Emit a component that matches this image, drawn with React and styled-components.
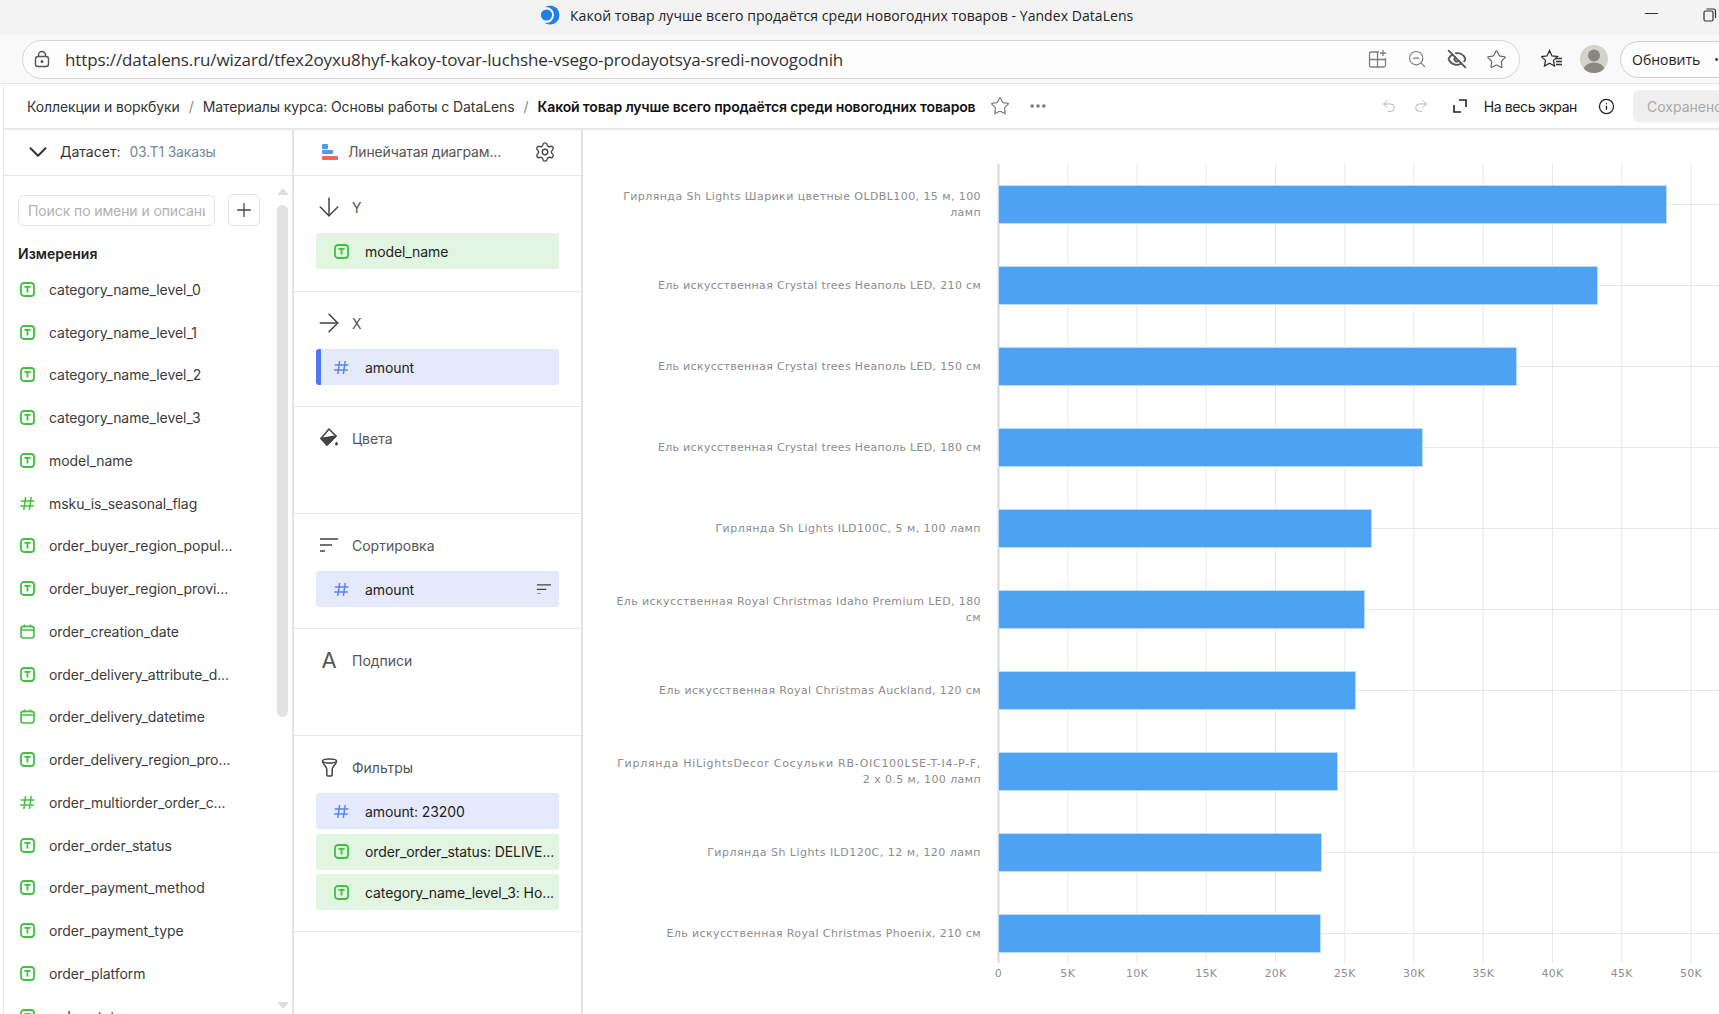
import React from "react"
import styled, { createGlobalStyle } from "styled-components"
import { ChevronDown, Plus, Settings, ArrowDown, ArrowRight, Star, Ellipsis, Undo2, Redo2, Info, ZoomOut, EyeOff } from "lucide-react"

const GlobalStyle = createGlobalStyle`
  html, body { margin: 0; padding: 0; background: #fff; }
  body { font-family: Inter, "Noto Sans", sans-serif; overflow: hidden; }
  * { box-sizing: border-box; }
`

const dimensions = [
  ["T", "category_name_level_0"],
  ["T", "category_name_level_1"],
  ["T", "category_name_level_2"],
  ["T", "category_name_level_3"],
  ["T", "model_name"],
  ["#", "msku_is_seasonal_flag"],
  ["T", "order_buyer_region_popul..."],
  ["T", "order_buyer_region_provi..."],
  ["D", "order_creation_date"],
  ["T", "order_delivery_attribute_d..."],
  ["D", "order_delivery_datetime"],
  ["T", "order_delivery_region_pro..."],
  ["#", "order_multiorder_order_c..."],
  ["T", "order_order_status"],
  ["T", "order_payment_method"],
  ["T", "order_payment_type"],
  ["T", "order_platform"],
  ["T", "order_status_ru_name"],
]

// tracking: letter spacing of the row's labels, the source font runs a bit wider
const bars = [
  { value: 48230, tracking: 0.42, lines: ["Гирлянда Sh Lights Шарики цветные OLDBL100, 15 м, 100", "ламп"] },
  { value: 43250, tracking: 0.32, lines: ["Ель искусственная Crystal trees Неаполь LED, 210 см"] },
  { value: 37400, tracking: 0.32, lines: ["Ель искусственная Crystal trees Неаполь LED, 150 см"] },
  { value: 30610, tracking: 0.32, lines: ["Ель искусственная Crystal trees Неаполь LED, 180 см"] },
  { value: 26930, tracking: 0.46, lines: ["Гирлянда Sh Lights ILD100C, 5 м, 100 ламп"] },
  { value: 26430, tracking: 0.4, lines: ["Ель искусственная Royal Christmas Idaho Premium LED, 180", "см"] },
  { value: 25780, tracking: 0.39, lines: ["Ель искусственная Royal Christmas Auckland, 120 см"] },
  { value: 24480, tracking: 0.72, lines: ["Гирлянда HiLightsDecor Сосульки RB-OIC100LSE-T-I4-P-F,", "2 x 0.5 м, 100 ламп"] },
  { value: 23320, tracking: 0.48, lines: ["Гирлянда Sh Lights ILD120C, 12 м, 120 ламп"] },
  { value: 23250, tracking: 0.39, lines: ["Ель искусственная Royal Christmas Phoenix, 210 см"] },
]

const ticks = [0, 5, 10, 15, 20, 25, 30, 35, 40, 45, 50]
const X0 = 998.5
const PER_K = 13.85

const TextIcon = ({ size = 15 }) => (
  <svg width={size} height={size} viewBox="0 0 15 15" fill="none" stroke="#3fc23f">
    <rect x="1" y="1" width="13" height="13" rx="3" strokeWidth="1.8" />
    <path d="M4.4 4.8h6.2M7.5 4.8v5.8" strokeWidth="1.8" />
  </svg>
)

const NumberIcon = ({ color = "#3fc23f", size = 15 }) => (
  <svg width={size} height={size} viewBox="0 0 15 15" fill="none" stroke={color} strokeWidth="1.5">
    <path d="M5.6 1 3.8 14M11.2 1 9.4 14M.8 5h13.6M.2 10h13.6" />
  </svg>
)

const DateIcon = () => (
  <svg width="15" height="15" viewBox="0 0 15 15" fill="none" stroke="#3fc23f" strokeWidth="1.6">
    <rect x="1" y="2.4" width="13" height="11.6" rx="2.5" />
    <path d="M1 6h13M4.5.5v3M10.5.5v3" />
  </svg>
)

const FieldIcon = ({ type }) => {
  if (type === "#") return <NumberIcon />
  if (type === "D") return <DateIcon />
  return <TextIcon />
}

const SortIcon = ({ width = 18 }) => (
  <svg width={width} height={width * 0.78} viewBox="0 0 18 14" fill="none" stroke="#444" strokeWidth="1.6">
    <path d="M0 1h18M0 7h12M0 13h5" />
  </svg>
)

const Page = () => (
  <Root>
    <GlobalStyle />
    <TitleBar>
      <svg width="20" height="20" viewBox="0 0 20 20">
        <circle cx="10" cy="10" r="9.5" fill="#1d7fe8" />
        <circle cx="6" cy="10" r="8" fill="#f3f3f3" />
        <circle cx="6.5" cy="10" r="5.6" fill="#1d7fe8" />
      </svg>
      <TitleText>Какой товар лучше всего продаётся среди новогодних товаров - Yandex DataLens</TitleText>
      <WindowButtons>
        <Minimize />
        <svg width="14" height="14" viewBox="0 0 14 14" fill="none" stroke="#333" strokeWidth="1.2">
          <rect x="1" y="3" width="9" height="10" rx="1.5" />
          <path d="M3.5 1h7a2 2 0 0 1 2 2v7" />
        </svg>
      </WindowButtons>
    </TitleBar>

    <AddressRow>
      <ClippedReload />
      <UrlPill>
        <svg width="18" height="18" viewBox="0 0 18 18" fill="none" stroke="#555" strokeWidth="1.4">
          <rect x="2.5" y="6.5" width="13" height="10" rx="2.5" />
          <path d="M5.5 6.5V5a3.5 3.5 0 0 1 7 0v1.5" />
          <circle cx="9" cy="11.5" r=".8" fill="#555" />
        </svg>
        <UrlText>https://datalens.ru/wizard/tfex2oyxu8hyf-kakoy-tovar-luchshe-vsego-prodayotsya-sredi-novogodnih</UrlText>
        <PillIcons>
          <svg width="20" height="20" viewBox="0 0 20 20" fill="none" stroke="#7d7d7d" strokeWidth="1.3">
            <path d="M11 3H3a1.5 1.5 0 0 0-1.5 1.5v12A1.5 1.5 0 0 0 3 18h13a1.5 1.5 0 0 0 1.5-1.5V9M9.5 3v15M1.5 10.5h16M15 1v6M12 4h6" />
          </svg>
          <ZoomOut size={20} color="#7d7d7d" strokeWidth={1.4} />
          <EyeOff size={20} color="#555" strokeWidth={2.2} />
          <Star size={21} color="#666" strokeWidth={1.3} />
        </PillIcons>
      </UrlPill>
      <FavList>
        <svg width="22" height="20" viewBox="0 0 22 20" fill="none" stroke="#333" strokeWidth="1.3">
          <path d="M8.5 1.5 11 7l5.5.6-4 3.8 1 5.6-5-2.8-5 2.8 1-5.6-4-3.8L6 7Z" />
          <path d="M14 9.5h7M15 12.5h6M15 15.5h6" />
        </svg>
      </FavList>
      <Avatar>
        <svg width="28" height="28" viewBox="0 0 28 28">
          <circle cx="14" cy="10.5" r="6" fill="#8a8783" />
          <ellipse cx="14" cy="24" rx="10" ry="6.5" fill="#8a8783" />
        </svg>
      </Avatar>
      <UpdateButton>Обновить<UpdateDots>•</UpdateDots></UpdateButton>
    </AddressRow>

    <Workspace>
      <Header>
        <Crumb>Коллекции и воркбуки</Crumb>
        <CrumbSlash>/</CrumbSlash>
        <Crumb>Материалы курса: Основы работы с DataLens</Crumb>
        <CrumbSlash>/</CrumbSlash>
        <CrumbCurrent>Какой товар лучше всего продаётся среди новогодних товаров</CrumbCurrent>
        <HeaderStar><Star size={20} color="#777" strokeWidth={1.4} /></HeaderStar>
        <HeaderDots><Ellipsis size={20} color="#777" strokeWidth={2.2} /></HeaderDots>
        <HeaderSpacer />
        <Undo2 size={16} color="#b5b5b5" strokeWidth={1.5} />
        <RedoWrap><Redo2 size={16} color="#b5b5b5" strokeWidth={1.5} /></RedoWrap>
        <FullscreenWrap>
          <svg width="14" height="14" viewBox="0 0 14 14" fill="none" stroke="#222" strokeWidth="1.6">
            <path d="M6 1h7v7M1 6v7h7" />
          </svg>
        </FullscreenWrap>
        <FullscreenLabel>На весь экран</FullscreenLabel>
        <InfoWrap><Info size={17} color="#222" strokeWidth={1.8} /></InfoWrap>
        <SaveButton>Сохранено</SaveButton>
      </Header>

      <Columns>
        <Column>
          <ColumnHead>
            <ChevronDown size={30} color="#333" strokeWidth={1.6} />
            <DatasetLabel>Датасет:</DatasetLabel>
            <DatasetName>03.Т1 Заказы</DatasetName>
          </ColumnHead>
          <LeftBody>
            <FieldsArea>
              <SearchRow>
                <SearchInput><SearchHint>Поиск по имени и описани</SearchHint></SearchInput>
                <AddButton><Plus size={22} color="#444" strokeWidth={1.4} /></AddButton>
              </SearchRow>
              <GroupTitle>Измерения</GroupTitle>
              {dimensions.map(([type, name]) => (
                <FieldRow key={name}>
                  <FieldIcon type={type} />
                  <span>{name}</span>
                </FieldRow>
              ))}
            </FieldsArea>
            <ScrollTrack>
              <ScrollArrow />
              <ScrollThumb />
              <ScrollArrow $down />
            </ScrollTrack>
          </LeftBody>
        </Column>

        <Column>
          <ColumnHead $chart>
            <svg width="17" height="18" viewBox="0 0 17 18">
              <rect x="1" y="1" width="6" height="5" rx="1" fill="#4a9ef0" />
              <rect x="1" y="7" width="11" height="4" rx="1" fill="#4a9ef0" />
              <rect x="1" y="13" width="16" height="4" rx="1" fill="#f2665c" />
            </svg>
            <ChartType>Линейчатая диаграм...</ChartType>
            <GearWrap><Settings size={22} color="#444" strokeWidth={1.5} /></GearWrap>
          </ColumnHead>

          <Section>
            <SectionTitle><TitleIcon><ArrowDown size={30} color="#444" strokeWidth={1.2} /></TitleIcon>Y</SectionTitle>
            <Chip $kind="text"><TextIcon /><ChipText>model_name</ChipText></Chip>
          </Section>

          <Section>
            <SectionTitle><TitleIcon><ArrowRight size={30} color="#444" strokeWidth={1.2} /></TitleIcon>X</SectionTitle>
            <Chip $kind="number" $accent><NumberIcon color="#5c82ef" /><ChipText>amount</ChipText></Chip>
          </Section>

          <Section>
            <SectionTitle>
              <TitleIcon>
                <svg width="20" height="20" viewBox="0 0 20 20" fill="none" stroke="#444" strokeWidth="1.6" strokeLinejoin="round">
                  <path d="M10 1 17 8 8 17 2 10.5Z" />
                  <path d="M2 10.5 17 8 8 17Z" fill="#444" />
                  <path d="M17.6 13.4c.9 1.2 1.4 2 1.4 2.7a1.5 1.5 0 0 1-3 0c0-.7.6-1.5 1.6-2.7Z" fill="#444" strokeWidth="0" />
                </svg>
              </TitleIcon>
              Цвета
            </SectionTitle>
          </Section>

          <Section>
            <SectionTitle><TitleIcon><SortIcon /></TitleIcon>Сортировка</SectionTitle>
            <Chip $kind="number">
              <NumberIcon color="#5c82ef" />
              <ChipText>amount</ChipText>
              <ChipEnd><SortIcon width={14} /></ChipEnd>
            </Chip>
          </Section>

          <Section>
            <SectionTitle><TitleIcon><LetterIcon>A</LetterIcon></TitleIcon>Подписи</SectionTitle>
          </Section>

          <Section>
            <SectionTitle>
              <TitleIcon>
                <svg width="17" height="19" viewBox="0 0 17 19" fill="none" stroke="#444" strokeWidth="1.5">
                  <ellipse cx="8.5" cy="3" rx="7" ry="2" />
                  <path d="M1.5 3.5c.5 3 4 5 4.3 7.5v6c0 .6.4 1 1 1h3.4c.6 0 1-.4 1-1v-6c.3-2.5 3.8-4.5 4.3-7.5" />
                </svg>
              </TitleIcon>
              Фильтры
            </SectionTitle>
            <ChipStack>
              <Chip $kind="number"><NumberIcon color="#5c82ef" /><ChipText>amount: 23200</ChipText></Chip>
              <Chip $kind="text"><TextIcon /><ChipText>order_order_status: DELIVE...</ChipText></Chip>
              <Chip $kind="text"><TextIcon /><ChipText>category_name_level_3: Ho...</ChipText></Chip>
            </ChipStack>
          </Section>
        </Column>

        <ChartArea>
          <svg width="1136" height="884" viewBox="583 130 1136 884">
            {ticks.map(t => (
              <line key={t} x1={X0 + t * PER_K} x2={X0 + t * PER_K} y1="164" y2="963" stroke={t === 0 ? "#d8d8d8" : "#e8e8e8"} strokeWidth={t === 0 ? 2 : 1} />
            ))}
            {bars.map((bar, i) => {
              const mid = 204.5 + i * 81
              return <line key={i} x1={X0} x2="1719" y1={mid} y2={mid} stroke="#e8e8e8" />
            })}
            {bars.map((bar, i) => {
              const top = 185.5 + i * 81
              const mid = 204.5 + i * 81
              return (
                <g key={i}>
                  <rect x={X0} y={top} width={bar.value * PER_K / 1000} height="38" fill="#4da2f1" stroke="#bcdcf8" strokeWidth="1" />
                  {bar.lines.map((line, n) => (
                    <ChartLabel key={n} $tracking={n === 0 ? bar.tracking : 0.4} x="981" y={mid + 3.5 + (n - (bar.lines.length - 1) / 2) * 16}>{line}</ChartLabel>
                  ))}
                </g>
              )
            })}
            {ticks.map(t => (
              <TickLabel key={t} x={X0 + t * PER_K} y="977">{t === 0 ? "0" : `${t}K`}</TickLabel>
            ))}
          </svg>
        </ChartArea>
      </Columns>
    </Workspace>
  </Root>
)

const Root = styled.div`
  width: 1719px;
  height: 1014px;
  display: flex;
  flex-direction: column;
  overflow: hidden;
  background: #fff;
`

const TitleBar = styled.div`
  height: 35px;
  flex: none;
  background: #f3f3f3;
  display: flex;
  align-items: center;
  padding: 0 0 5px 540px;
`

const TitleText = styled.div`
  margin-left: 10px;
  font-family: "Open Sans", sans-serif;
  font-size: 14px;
  letter-spacing: 0.06px;
  color: #222;
  white-space: nowrap;
`

const WindowButtons = styled.div`
  margin-left: auto;
  margin-right: 2px;
  display: flex;
  align-items: center;
  gap: 45px;
`

const Minimize = styled.div`
  width: 13px;
  height: 1px;
  margin-bottom: 4px;
  background: #333;
`

const AddressRow = styled.div`
  height: 49px;
  flex: none;
  background: #f9f9f9;
  border-bottom: 1px solid #e6e6e6;
  display: flex;
  align-items: center;
`

const ClippedReload = styled.div`
  width: 2px;
  height: 10px;
  background: #666;
  margin-right: 22px;
`

const UrlPill = styled.div`
  width: 1498px;
  height: 39px;
  flex: none;
  background: #fdfdfd;
  border: 1px solid #d6d6d6;
  border-radius: 20px;
  display: flex;
  align-items: center;
  padding: 0 12px 0 10px;
`

const UrlText = styled.div`
  margin-left: 14px;
  font-family: "Open Sans", sans-serif;
  font-size: 17px;
  letter-spacing: -0.115px;
  color: #333;
  white-space: nowrap;
`

const PillIcons = styled.div`
  margin-left: auto;
  display: flex;
  align-items: center;
  gap: 19.5px;
`

const FavList = styled.div`
  margin-left: 21px;
  display: flex;
`

const Avatar = styled.div`
  width: 28px;
  height: 28px;
  flex: none;
  margin-left: 17px;
  border-radius: 50%;
  background: #d4d2cd;
  overflow: hidden;
  display: flex;
`

const UpdateButton = styled.div`
  margin-left: 12px;
  width: 120px;
  flex: none;
  height: 37px;
  border: 1px solid #d0d0d0;
  border-radius: 19px;
  background: #fdfdfd;
  display: flex;
  align-items: center;
  padding-left: 11px;
  font-family: "Open Sans", sans-serif;
  font-size: 14px;
  color: #222;
`

const UpdateDots = styled.span`
  margin-left: 14px;
  font-size: 12px;
`

const Workspace = styled.div`
  flex: 1;
  min-height: 0;
  margin-left: 3px;
  border-left: 1px solid #e6e6e6;
  display: flex;
  flex-direction: column;
`

const Header = styled.div`
  height: 46px;
  flex: none;
  border-bottom: 2px solid #e8e8e8;
  display: flex;
  align-items: center;
  padding-left: 23px;
  margin-right: -28px;
  font-size: 14px;
  color: #222;
  white-space: nowrap;
`

const Crumb = styled.span`
  color: #333;
  letter-spacing: -0.1px;
`

const CrumbSlash = styled.span`
  margin: 0 9px;
  color: #888;
`

const CrumbCurrent = styled.span`
  font-weight: 600;
  letter-spacing: -0.15px;
  color: #111;
`

const HeaderStar = styled.span`
  margin-left: 15px;
  display: flex;
`

const HeaderDots = styled.span`
  margin-left: 18px;
  display: flex;
`

const HeaderSpacer = styled.div`
  flex: 1;
`

const RedoWrap = styled.span`
  margin-left: 16px;
  display: flex;
`

const FullscreenWrap = styled.span`
  margin-left: 24px;
  display: flex;
`

const FullscreenLabel = styled.span`
  margin-left: 17px;
  letter-spacing: -0.4px;
`

const InfoWrap = styled.span`
  margin-left: 21px;
  display: flex;
`

const SaveButton = styled.div`
  margin-left: 18px;
  width: 114px;
  height: 32px;
  background: #efefef;
  border-radius: 6px;
  color: #a8a8a8;
  display: flex;
  align-items: center;
  padding-left: 14px;
`

const Columns = styled.div`
  flex: 1;
  min-height: 0;
  display: grid;
  grid-template-columns: 290px 289px 1fr;
`

const Column = styled.div`
  min-width: 0;
  height: 100%;
  border-right: 2px solid #e4e4e4;
  display: flex;
  flex-direction: column;
  overflow: hidden;
`

const ColumnHead = styled.div`
  height: 46px;
  flex: none;
  border-bottom: 1px solid #e6e6e6;
  display: flex;
  align-items: center;
  padding: 0 0 2px ${p => (p.$chart ? "27px" : "19px")};
  font-size: 14px;
  white-space: nowrap;
  svg { flex: none; }
`

const DatasetLabel = styled.span`
  margin-left: 7px;
  color: #333;
`

const DatasetName = styled.span`
  margin-left: 9px;
  letter-spacing: -0.2px;
  color: #75889b;
`

const ChartType = styled.span`
  margin-left: 10px;
  letter-spacing: -0.15px;
  color: #555;
`

const GearWrap = styled.span`
  margin-left: auto;
  margin-right: 25px;
  display: flex;
`

const LeftBody = styled.div`
  flex: 1;
  min-height: 0;
  display: flex;
`

const FieldsArea = styled.div`
  flex: 1;
  min-width: 0;
  padding: 18px 0 0 14px;
  overflow: hidden;
`

const SearchRow = styled.div`
  display: flex;
  align-items: center;
  gap: 13px;
`

const SearchInput = styled.div`
  width: 197px;
  height: 31px;
  border: 1px solid #e4e4e4;
  border-radius: 6px;
  padding: 0 9px;
  font-size: 14px;
  line-height: 29px;
  color: #b2b2b2;
`

const SearchHint = styled.div`
  overflow: hidden;
  white-space: nowrap;
  letter-spacing: -0.1px;
`

const AddButton = styled.div`
  width: 32px;
  height: 32px;
  border: 1px solid #e4e4e4;
  border-radius: 6px;
  display: flex;
  align-items: center;
  justify-content: center;
`

const GroupTitle = styled.div`
  margin: 18px 0 4px;
  font-size: 14px;
  font-weight: 600;
  line-height: 20px;
  color: #222;
`

const FieldRow = styled.div`
  height: 42.75px;
  display: flex;
  align-items: center;
  gap: 14px;
  padding-left: 2px;
  font-size: 14px;
  letter-spacing: -0.06px;
  color: #3c3c3c;
  white-space: nowrap;
  svg { flex: none; }
`

const ScrollTrack = styled.div`
  width: 11px;
  flex: none;
  margin: 12px 4px 5px 0;
  display: flex;
  flex-direction: column;
  align-items: center;
`

const ScrollArrow = styled.div`
  width: 0;
  height: 0;
  border-left: 6px solid transparent;
  border-right: 6px solid transparent;
  ${p => (p.$down ? "border-top: 7px solid #dedede; margin-top: auto;" : "border-bottom: 7px solid #dedede;")}
`

const ScrollThumb = styled.div`
  width: 11px;
  height: 512px;
  margin-top: 10px;
  border-radius: 6px;
  background: #e2e2e2;
`

const Section = styled.div`
  min-height: 107px;
  flex: none;
  padding: 19px 22px 21px;
  border-bottom: 1px solid #e6e6e6;
  &:nth-child(2) { padding-bottom: 22px; }
`

const SectionTitle = styled.div`
  height: 24px;
  margin-bottom: 14px;
  display: flex;
  align-items: center;
  gap: 10px;
  font-size: 14px;
  color: #555;
`

const TitleIcon = styled.span`
  width: 26px;
  flex: none;
  display: flex;
  justify-content: center;
  align-items: center;
  svg { flex: none; }
`

const LetterIcon = styled.span`
  font-size: 22px;
  font-weight: 400;
  color: #555;
`

const chipColors = { text: "#e1f5e1", number: "#e4eafc" }

const Chip = styled.div`
  width: 243px;
  height: 36px;
  border-radius: 3px;
  background: ${p => chipColors[p.$kind]};
  border-left: ${p => (p.$accent ? "5px solid #4d78ee" : "none")};
  padding-left: ${p => (p.$accent ? "13px" : "18px")};
  display: flex;
  align-items: center;
  font-size: 14px;
  letter-spacing: -0.1px;
  color: #222;
  white-space: nowrap;
  svg { flex: none; }
`

const ChipText = styled.span`
  margin-left: 16px;
`

const ChipEnd = styled.span`
  margin-left: auto;
  margin-right: 8px;
  display: flex;
`

const ChipStack = styled.div`
  display: flex;
  flex-direction: column;
  gap: 4.5px;
`

const ChartArea = styled.div`
  min-width: 0;
  overflow: hidden;
  svg { display: block; }
`

const ChartLabel = styled.text`
  font-family: "DejaVu Sans", sans-serif;
  font-size: 11px;
  letter-spacing: ${p => p.$tracking}px;
  fill: #8c8c8c;
  text-anchor: end;
`

const TickLabel = styled.text`
  font-family: "DejaVu Sans", sans-serif;
  font-size: 11px;
  letter-spacing: 0.3px;
  fill: #8f8f8f;
  text-anchor: middle;
`

export default Page
